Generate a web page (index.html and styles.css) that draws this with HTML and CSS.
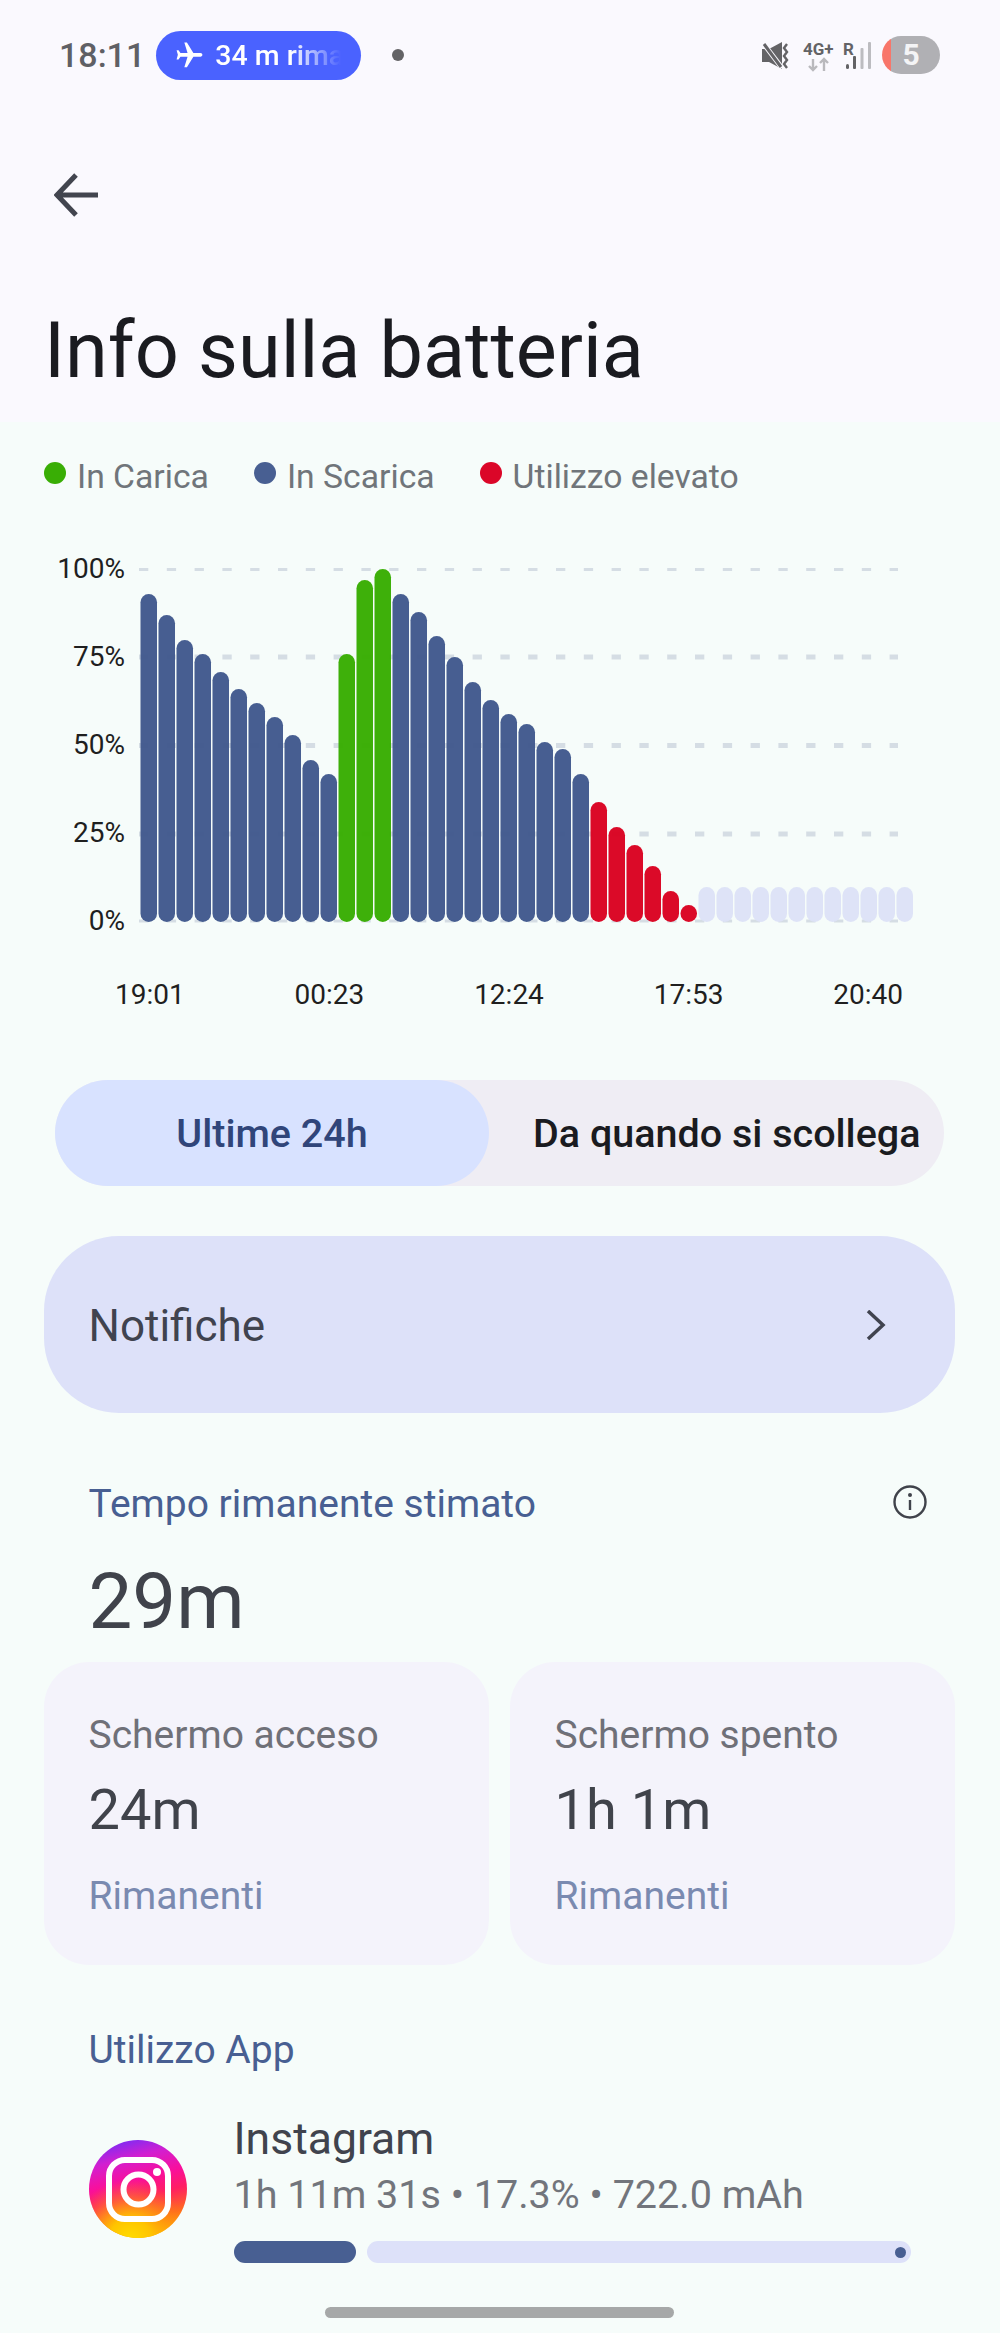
FILE: index.html
```html
<!DOCTYPE html>
<html lang="it">
<head>
    <meta charset="UTF-8">
    <meta name="viewport" content="width=device-width, initial-scale=1.0">
    <title>Info sulla batteria</title>
    <link rel="stylesheet" href="styles.css">
</head>
<body>
    <header class="top">
        <div class="status">
            <span class="clock">18:11</span>
            <div class="call-pill">
                <svg class="plane" viewBox="0 0 24 24"><path transform="rotate(90 12 12)" d="M21 16v-2l-8-5V3.5c0-.83-.67-1.5-1.5-1.5S10 2.67 10 3.5V9l-8 5v2l8-2.5V19l-2 1.5V22l3.5-1 3.5 1v-1.5L13 19v-5.5l8 2.5z"/></svg>
                <span class="call-text">34 m rimanenti</span>
            </div>
            <span class="status-dot"></span>
            <div class="status-right">
                <!-- silenzioso con vibrazione -->
                <svg class="mute" viewBox="0 0 28 27">
                    <path class="mute-fill" d="M0 7h7L20 0v27L7 20H0z"/>
                    <path class="mute-cut" d="M1 1l19 25"/>
                    <path class="mute-slash" d="M2 2l17 23"/>
                    <path class="mute-wave" d="M25 2l-3 4 3 4-3 4 3 4-3 4 3 4"/>
                </svg>
                <svg class="net" viewBox="800 38 74 34">
                    <text class="net-text" x="803" y="54">4G+</text>
                    <path class="net-arrow" d="M813 58v11M809 65l4 4 4-4M824 70V59M820 62l4-4 4 4"/>
                    <text class="net-text" x="843" y="54">R</text>
                    <rect class="sig" x="846" y="63" width="3" height="5" rx="1.5"/>
                    <rect class="sig" x="853" y="55" width="3" height="13" rx="1"/>
                    <rect class="sig-off" x="860.5" y="47" width="3" height="21" rx="1"/>
                    <rect class="sig-off" x="868" y="41" width="3" height="27" rx="1"/>
                </svg>
                <span class="battery">5</span>
            </div>
        </div>
        <svg class="back" viewBox="0 0 44 44"><path d="M44 22H4M22 2L3 22l19 20"/></svg>
        <h1>Info sulla batteria</h1>
    </header>

    <div class="legend">
        <span class="legend-item"><i class="dot green"></i>In Carica</span>
        <span class="legend-item"><i class="dot blue"></i>In Scarica</span>
        <span class="legend-item"><i class="dot red"></i>Utilizzo elevato</span>
    </div>

    <div class="chart">
        <div class="y-axis">
            <span>100%</span>
            <span>75%</span>
            <span>50%</span>
            <span>25%</span>
            <span>0%</span>
        </div>
        <svg class="plot" viewBox="130 525 790 440">
            <g class="grid">
                <line class="thin" x1="139" y1="569.5" x2="898" y2="569.5"/>
                <line x1="139" y1="657" x2="898" y2="657"/>
                <line x1="139" y1="745.5" x2="898" y2="745.5"/>
                <line x1="139" y1="834" x2="898" y2="834"/>
                <line class="thin" x1="139" y1="921" x2="898" y2="921"/>
            </g>
            <g class="bars fill-blue">
                <rect x="140.5" y="594" height="328"/>
                <rect x="158.5" y="615" height="307"/>
                <rect x="176.5" y="640" height="282"/>
                <rect x="194.5" y="654" height="268"/>
                <rect x="212.5" y="672" height="250"/>
                <rect x="230.5" y="689" height="233"/>
                <rect x="248.5" y="703" height="219"/>
                <rect x="266.5" y="717" height="205"/>
                <rect x="284.5" y="735" height="187"/>
                <rect x="302.5" y="760" height="162"/>
                <rect x="320.5" y="774" height="148"/>
            </g>
            <g class="bars fill-green">
                <rect x="338.5" y="654" height="268"/>
                <rect x="356.5" y="580" height="342"/>
                <rect x="374.5" y="569" height="353"/>
            </g>
            <g class="bars fill-blue">
                <rect x="392.5" y="594" height="328"/>
                <rect x="410.5" y="612" height="310"/>
                <rect x="428.5" y="636" height="286"/>
                <rect x="446.5" y="657" height="265"/>
                <rect x="464.5" y="682" height="240"/>
                <rect x="482.5" y="700" height="222"/>
                <rect x="500.5" y="714" height="208"/>
                <rect x="518.5" y="724" height="198"/>
                <rect x="536.5" y="742" height="180"/>
                <rect x="554.5" y="749" height="173"/>
                <rect x="572.5" y="774" height="148"/>
            </g>
            <g class="bars fill-red">
                <rect x="590.5" y="802" height="120"/>
                <rect x="608.5" y="827" height="95"/>
                <rect x="626.5" y="845" height="77"/>
                <rect x="644.5" y="866" height="56"/>
                <rect x="662.5" y="891" height="31"/>
                <rect x="680.5" y="905" height="17"/>
            </g>
            <!-- previsione -->
            <g class="bars fill-pale">
                <rect x="698.5" y="887" height="35"/>
                <rect x="716.5" y="887" height="35"/>
                <rect x="734.5" y="887" height="35"/>
                <rect x="752.5" y="887" height="35"/>
                <rect x="770.5" y="887" height="35"/>
                <rect x="788.5" y="887" height="35"/>
                <rect x="806.5" y="887" height="35"/>
                <rect x="824.5" y="887" height="35"/>
                <rect x="842.5" y="887" height="35"/>
                <rect x="860.5" y="887" height="35"/>
                <rect x="878.5" y="887" height="35"/>
                <rect x="896.5" y="887" height="35"/>
            </g>
        </svg>
    </div>

    <div class="x-axis">
        <span>19:01</span>
        <span>00:23</span>
        <span>12:24</span>
        <span>17:53</span>
        <span>20:40</span>
    </div>

    <div class="toggle">
        <span class="toggle-on">Ultime 24h</span>
        <span class="toggle-off">Da quando si scollega</span>
    </div>

    <div class="notify">
        <span class="notify-text">Notifiche</span>
        <svg class="chevron" viewBox="0 0 20 30"><path d="M2 1l15 14L2 29"/></svg>
    </div>

    <div class="estimate-head">
        <span class="section-title">Tempo rimanente stimato</span>
        <svg class="info" viewBox="0 0 34 34">
            <circle cx="17" cy="17" r="15.5"/>
            <path d="M17 15v10"/>
            <circle class="info-dot" cx="17" cy="10" r="2"/>
        </svg>
    </div>
    <div class="estimate">29m</div>

    <div class="cards">
        <div class="card">
            <div class="card-label">Schermo acceso</div>
            <div class="card-value">24m</div>
            <div class="card-foot">Rimanenti</div>
        </div>
        <div class="card">
            <div class="card-label">Schermo spento</div>
            <div class="card-value">1h 1m</div>
            <div class="card-foot">Rimanenti</div>
        </div>
    </div>

    <div class="section-title usage-title">Utilizzo App</div>

    <div class="app">
        <svg class="app-icon" viewBox="0 0 98 98">
            <defs>
                <radialGradient id="igYellow" cx="0.42" cy="1.02" r="0.62">
                    <stop offset="0" stop-color="#ffdd00"/>
                    <stop offset="0.35" stop-color="#ffc400"/>
                    <stop offset="1" stop-color="#ff7a1a" stop-opacity="0"/>
                </radialGradient>
                <linearGradient id="igBase" x1="0.3" y1="0" x2="0.55" y2="1">
                    <stop offset="0" stop-color="#7a2cf5"/>
                    <stop offset="0.2" stop-color="#d21fd0"/>
                    <stop offset="0.42" stop-color="#f90f9b"/>
                    <stop offset="0.6" stop-color="#ff1e63"/>
                    <stop offset="0.82" stop-color="#ff6a1e"/>
                    <stop offset="1" stop-color="#ffb400"/>
                </linearGradient>
            </defs>
            <circle cx="49" cy="49" r="49" fill="url(#igBase)"/>
            <circle cx="49" cy="49" r="49" fill="url(#igYellow)"/>
            <rect class="ig-line" x="20" y="20" width="59" height="59" rx="16"/>
            <circle class="ig-line" cx="49.5" cy="49.5" r="15"/>
            <circle class="ig-dot" cx="68" cy="32" r="4"/>
        </svg>
        <div class="app-info">
            <div class="app-name">Instagram</div>
            <div class="app-meta">1h 11m 31s • 17.3% • 722.0 mAh</div>
            <div class="app-bar">
                <span class="app-bar-used"></span>
                <span class="app-bar-rest"><i></i></span>
            </div>
        </div>
    </div>

    <div class="home-pill"></div>
</body>
</html>
```

FILE: styles.css
```css
* {
    box-sizing: border-box;
}
body {
    margin: 0;
    padding: 0;
    width: 1000px;
    height: 2333px;
    overflow: hidden;
    position: relative;
    background-color: #f6fcfa;
    font-family: Roboto, "Liberation Sans", sans-serif;
}

/* header */
.top {
    height: 422px;
    background-color: #faf9fe;
    overflow: hidden;
}
.status {
    display: flex;
    align-items: center;
    height: 110px;
    padding: 0 60px 0 59px;
}
.clock {
    font-size: 34px;
    font-weight: 500;
    color: #5f6065;
}
.call-pill {
    display: flex;
    align-items: center;
    width: 205px;
    height: 49px;
    margin-left: 11px;
    padding-left: 18px;
    border-radius: 25px;
    background-color: #4a62ff;
    color: #fff;
}
.plane {
    flex: none;
    width: 31px;
    height: 31px;
    fill: #fff;
}
.call-text {
    width: 126px;
    margin-left: 10px;
    overflow: hidden;
    white-space: nowrap;
    font-size: 28.5px;
    font-weight: 500;
    mask-image: linear-gradient(90deg, #000 60%, transparent 100%);
}
.status-dot {
    width: 12px;
    height: 12px;
    margin-left: 31px;
    border-radius: 50%;
    background-color: #636366;
}
.status-right {
    display: flex;
    align-items: center;
    margin-left: auto;
}
.mute {
    width: 28px;
    height: 27px;
    margin-top: 1px;
}
.mute-fill {
    fill: #636366;
}
.mute-cut {
    fill: none;
    stroke: #faf9fe;
    stroke-width: 5;
}
.mute-slash {
    fill: none;
    stroke: #636366;
    stroke-width: 3;
}
.mute-wave {
    fill: none;
    stroke: #636366;
    stroke-width: 2.4;
}
.net {
    width: 74px;
    height: 34px;
    margin-left: 10px;
    margin-top: 1px;
}
.net-text {
    font-size: 17px;
    font-weight: 700;
    fill: #636366;
}
.net-arrow {
    fill: none;
    stroke: #b9b9bd;
    stroke-width: 2.4;
}
.sig {
    fill: #636366;
}
.sig-off {
    fill: #bcbcc0;
}
.battery {
    width: 58px;
    height: 38px;
    margin-left: 8px;
    border-radius: 19px;
    background: linear-gradient(90deg, #f8766a 9px, #b0b0b4 9px);
    color: #f4f4f6;
    font-size: 30px;
    font-weight: 700;
    line-height: 38px;
    text-align: center;
}
.back {
    display: block;
    width: 44px;
    height: 44px;
    margin: 63px 0 0 54px;
    fill: none;
    stroke: #42454f;
    stroke-width: 5;
}
h1 {
    margin: 89px 0 0 44px;
    font-size: 77.4px;
    font-weight: 400;
    line-height: 90px;
    color: #1a1b20;
}

/* legenda */
.legend {
    display: flex;
    height: 32px;
    margin-top: 39px;
    padding-left: 44px;
}
.legend-item {
    display: flex;
    align-items: center;
    margin-right: 45px;
    font-size: 33.7px;
    line-height: 32px;
    color: #70757a;
}
.dot {
    width: 22px;
    height: 22px;
    margin: 0 11px 8px 0;
    border-radius: 50%;
}
.green {
    background-color: #39ae05;
}
.blue {
    background-color: #485f92;
}
.red {
    background-color: #db0628;
}

/* grafico */
.chart {
    display: flex;
    height: 440px;
    margin-top: 32px;
}
.y-axis {
    width: 125px;
    text-align: right;
    font-size: 28px;
    color: #1f1f1f;
}
.y-axis span {
    display: block;
    height: 88px;
    line-height: 88px;
}
.plot {
    display: block;
    width: 790px;
    height: 440px;
    margin-left: 5px;
}
.grid line {
    stroke: #d5dde4;
    stroke-width: 5;
    stroke-dasharray: 9.3 18.5;
}
.grid .thin {
    stroke-width: 3;
}
.bars rect {
    width: 16.5px;
    rx: 8.25px;
    opacity: 0.96;
}
.fill-blue {
    fill: #3f578c;
}
.fill-green {
    fill: #36ad00;
}
.fill-red {
    fill: #da001f;
}
.fill-pale {
    fill: #dde2f7;
}
.x-axis {
    display: flex;
    justify-content: space-between;
    height: 38px;
    margin-top: 11px;
    padding: 0 97px 0 115px;
    font-size: 28px;
    line-height: 38px;
    color: #1f1f1f;
}

/* selettore */
.toggle {
    display: flex;
    height: 106px;
    margin: 66px 56px 0 55px;
    border-radius: 53px;
    background-color: #efedf4;
    font-size: 39.5px;
    font-weight: 500;
    line-height: 108px;
    white-space: nowrap;
}
.toggle-on {
    width: 434px;
    border-radius: 53px;
    background-color: #d8e2ff;
    color: #30457a;
    text-align: center;
}
.toggle-off {
    padding-left: 44px;
    color: #1a1b20;
}

.notify {
    display: flex;
    align-items: center;
    justify-content: space-between;
    height: 177px;
    margin: 50px 45px 0 44px;
    padding: 0 69px 0 44.5px;
    border-radius: 75px;
    background-color: #dde1f9;
    font-size: 44px;
    color: #40434f;
}
.notify-text {
    margin-top: 2px;
}
.chevron {
    width: 20px;
    height: 30px;
    fill: none;
    stroke: #40434f;
    stroke-width: 3.5;
}

/* stima */
.estimate-head {
    display: flex;
    align-items: center;
    justify-content: space-between;
    height: 40px;
    margin-top: 71px;
    padding: 0 73px 0 88.5px;
}
.section-title {
    font-size: 39px;
    line-height: 40px;
    color: #485f92;
}
.info {
    width: 34px;
    height: 34px;
    margin-top: -4px;
    fill: none;
    stroke: #40434b;
    stroke-width: 2.4;
}
.info-dot {
    fill: #40434b;
    stroke: none;
}
.estimate {
    height: 90px;
    margin-top: 33px;
    padding-left: 88.5px;
    font-size: 78px;
    line-height: 90px;
    color: #40434b;
}
.cards {
    display: flex;
    gap: 21px;
    margin: 15px 45px 0 44px;
}
.card {
    flex: 1;
    height: 303px;
    padding: 53px 0 0 44.5px;
    border-radius: 45px;
    background-color: #f4f3fb;
}
.card-label {
    font-size: 39px;
    line-height: 40px;
    color: #6f7078;
}
.card-value {
    margin-top: 23px;
    font-size: 56px;
    line-height: 64px;
    color: #40434b;
}
.card-foot {
    margin-top: 34px;
    font-size: 39px;
    line-height: 40px;
    color: #7a8ab0;
}

/* app */
.usage-title {
    margin-top: 65px;
    padding-left: 88.5px;
}
.app {
    display: flex;
    align-items: center;
    margin-top: 45px;
    padding-left: 89px;
}
.app-icon {
    flex: none;
    width: 98px;
    height: 98px;
}
.ig-line {
    fill: none;
    stroke: #fff;
    stroke-width: 6;
}
.ig-dot {
    fill: #fff;
}
.app-info {
    margin-left: 46.5px;
}
.app-name {
    font-size: 44.5px;
    line-height: 48px;
    color: #40434d;
}
.app-meta {
    margin-top: 12px;
    font-size: 39.5px;
    line-height: 40px;
    white-space: nowrap;
    color: #72757c;
}
.app-bar {
    display: flex;
    gap: 11px;
    margin-top: 26px;
}
.app-bar-used {
    width: 122px;
    height: 22px;
    border-radius: 11px;
    background-color: #485f92;
}
.app-bar-rest {
    display: flex;
    align-items: center;
    justify-content: flex-end;
    width: 544px;
    height: 22px;
    padding-right: 5px;
    border-radius: 11px;
    background-color: #dde1f9;
}
.app-bar-rest i {
    width: 11px;
    height: 11px;
    border-radius: 50%;
    background-color: #485f92;
}

.home-pill {
    position: absolute;
    left: 325px;
    bottom: 15px;
    width: 349px;
    height: 11px;
    border-radius: 6px;
    background-color: #a6a8a8;
}
```
